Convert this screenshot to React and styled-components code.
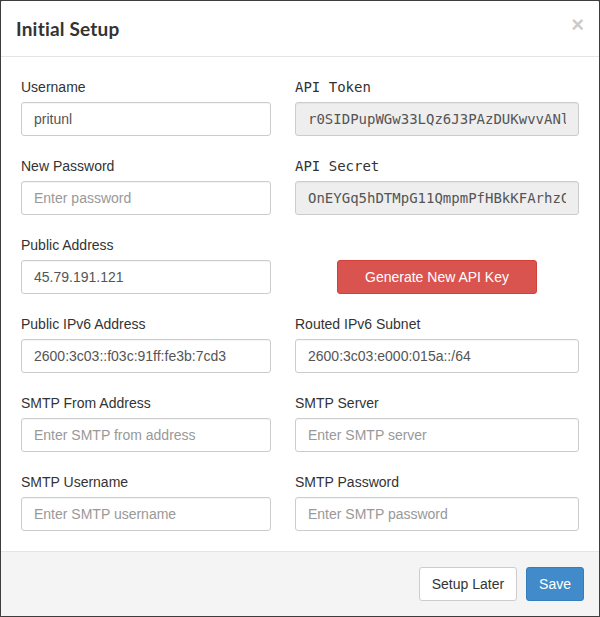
import React from "react";
import styled, { createGlobalStyle } from "styled-components";

const GlobalStyle = createGlobalStyle`
	html, body {
		margin: 0;
		padding: 0;
		background: #3d3d3d;
	}
	* {
		box-sizing: border-box;
	}
`;

const Modal = styled.div`
	width: 600px;
	height: 617px;
	display: flex;
	flex-direction: column;
	background: #fff;
	border: 1px solid #3d3d3d;
	border-radius: 2px;
	font-family: "Liberation Sans", Arial, sans-serif;
	color: #333;
`;

const Header = styled.div`
	height: 56px;
	padding: 0 15px;
	display: flex;
	align-items: center;
	justify-content: space-between;
	border-bottom: 1px solid #e5e5e5;
`;

const Title = styled.h4`
	margin: 0;
	font-family: Lato, "DejaVu Sans", sans-serif;
	font-weight: 700;
	font-size: 19px;
	color: #333;
	letter-spacing: 0.2px;
`;

const Close = styled.span`
	font-family: "Liberation Sans", Arial, sans-serif;
	font-size: 22px;
	font-weight: 700;
	color: #000;
	opacity: 0.2;
	line-height: 1;
	margin-top: -8px;
`;

const Body = styled.div`
	flex: 1;
	padding: 20px;
	display: grid;
	grid-template-columns: 250px 1fr;
	align-content: start;
	column-gap: 24px;
	row-gap: 20px;
`;

const Field = styled.div`
	display: flex;
	flex-direction: column;
	justify-content: flex-end;
`;

const Label = styled.label`
	display: block;
	font-size: 14px;
	line-height: 20px;
	margin-bottom: 5px;
	color: #333;
	font-family: ${(p) => (p.$mono ? '"DejaVu Sans Mono", monospace' : '"Liberation Sans", Arial, sans-serif')};
`;

const Input = styled.input`
	width: 100%;
	height: 34px;
	padding: 6px 12px;
	font-size: 14px;
	color: #555;
	border: 1px solid #ccc;
	border-radius: 3px;
	background: ${(p) => (p.readOnly ? "#eee" : "#fff")};
	font-family: ${(p) => (p.$mono ? '"DejaVu Sans Mono", monospace' : '"Liberation Sans", Arial, sans-serif')};
	box-shadow: inset 0 1px 1px rgba(0, 0, 0, 0.04);
	outline: none;
	&::placeholder {
		color: #999;
	}
`;

const Centered = styled.div`
	display: flex;
	align-items: flex-end;
	justify-content: center;
`;

const Button = styled.button`
	height: 34px;
	padding: 6px 12px;
	font-size: 14px;
	font-family: "Liberation Sans", Arial, sans-serif;
	border-radius: 3px;
	border: 1px solid ${(p) => p.$border};
	background: ${(p) => p.$bg};
	color: ${(p) => p.$color};
	cursor: pointer;
`;

const WideButton = styled(Button)`
	width: 200px;
`;

const Footer = styled.div`
	height: 65px;
	padding: 0 15px;
	display: flex;
	align-items: center;
	justify-content: flex-end;
	gap: 9px;
	background: #f4f4f4;
	border-top: 1px solid #e5e5e5;
`;

const fields = [
	["Username", "pritunl", ""],
	["API Token", "r0SIDPupWGw33LQz6J3PAzDUKwvvANlQmr7x", "", true],
	["New Password", "", "Enter password"],
	["API Secret", "OnEYGq5hDTMpG11QmpmPfHBkKFArhzCw8sXo", "", true],
	["Public Address", "45.79.191.121", ""],
	null,
	["Public IPv6 Address", "2600:3c03::f03c:91ff:fe3b:7cd3", ""],
	["Routed IPv6 Subnet", "2600:3c03:e000:015a::/64", ""],
	["SMTP From Address", "", "Enter SMTP from address"],
	["SMTP Server", "", "Enter SMTP server"],
	["SMTP Username", "", "Enter SMTP username"],
	["SMTP Password", "", "Enter SMTP password"],
];

export default function App() {
	return (
		<>
			<GlobalStyle />
			<Modal>
				<Header>
					<Title>Initial Setup</Title>
					<Close>×</Close>
				</Header>
				<Body>
					{fields.map((f, i) =>
						f ? (
							<Field key={i}>
								<Label $mono={f[3]}>{f[0]}</Label>
								<Input
									$mono={f[3]}
									readOnly={!!f[3]}
									defaultValue={f[1]}
									placeholder={f[2]}
									type={f[0].includes("Password") ? "password" : "text"}
								/>
							</Field>
						) : (
							<Centered key={i}>
								<WideButton $bg="#d9534f" $border="#d43f3a" $color="#fff">
									Generate New API Key
								</WideButton>
							</Centered>
						)
					)}
				</Body>
				<Footer>
					<Button $bg="#fff" $border="#ccc" $color="#333">
						Setup Later
					</Button>
					<Button $bg="#428bca" $border="#357ebd" $color="#fff">
						Save
					</Button>
				</Footer>
			</Modal>
		</>
	);
}
